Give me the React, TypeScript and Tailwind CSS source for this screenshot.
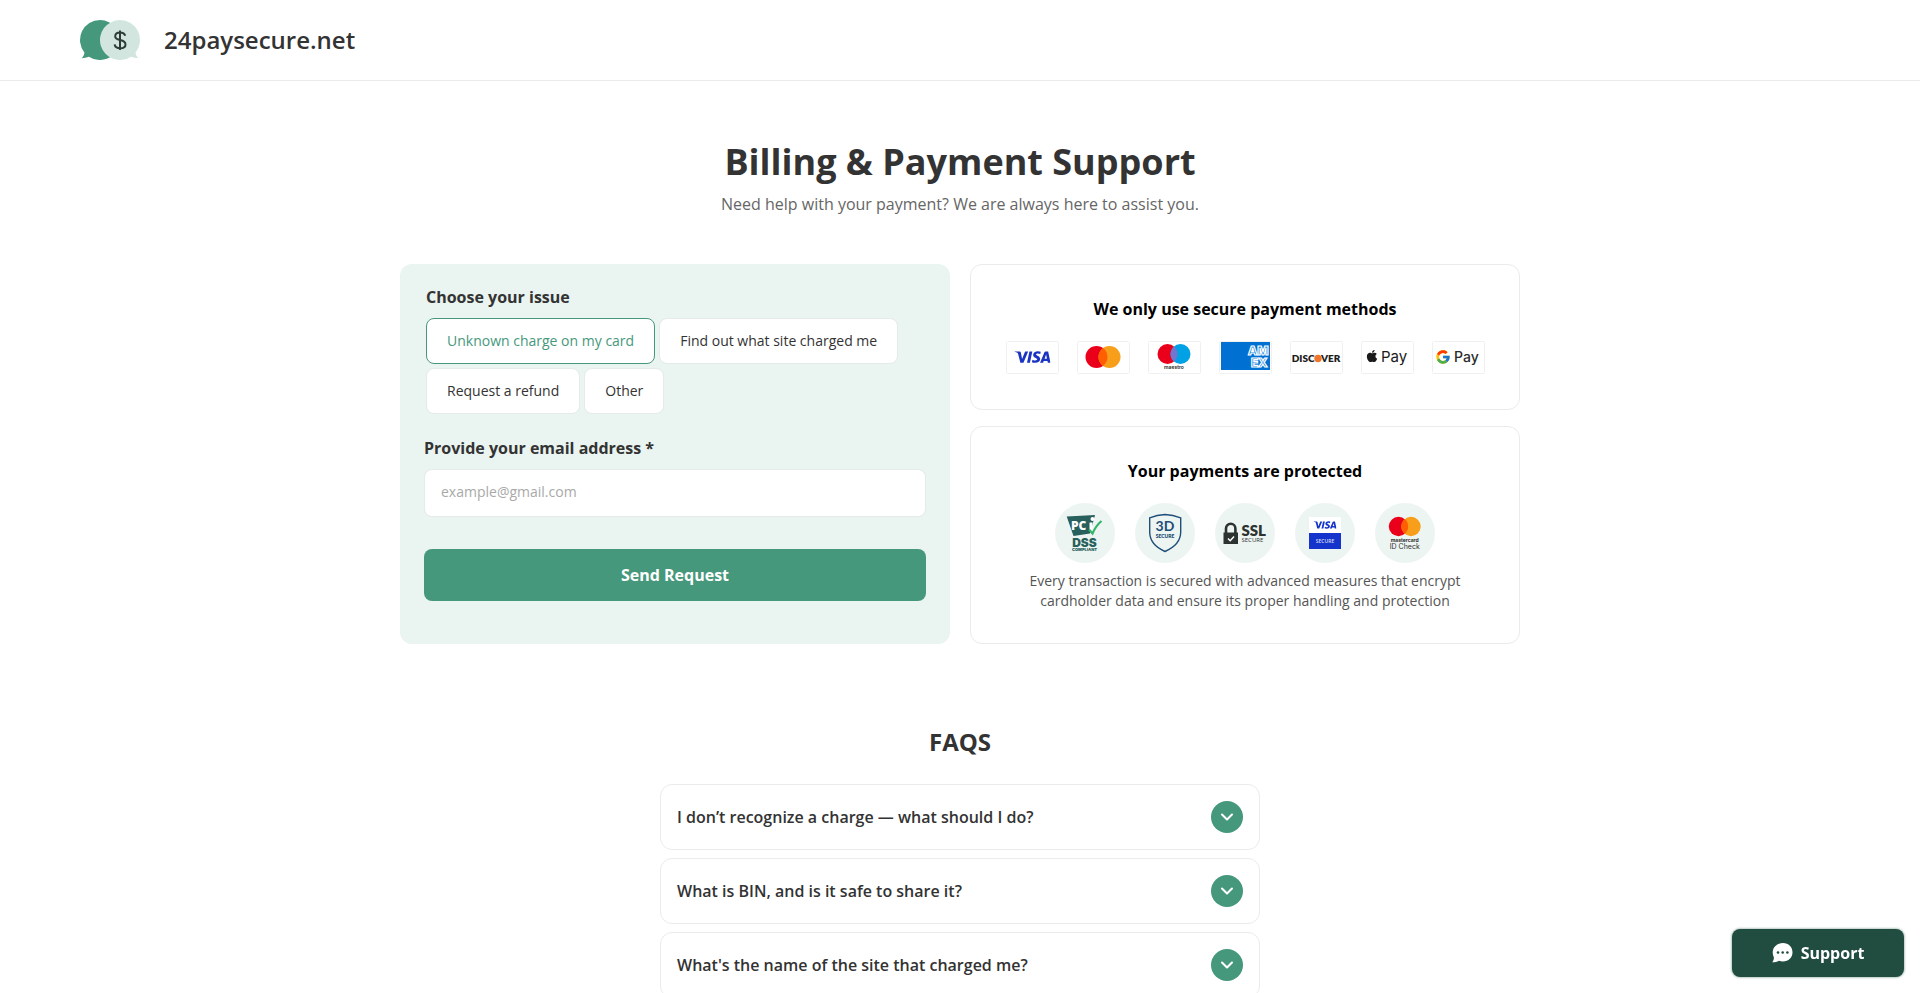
import React, { useState } from "react";
import { FaApple } from "react-icons/fa";
import { FcGoogle } from "react-icons/fc";
import { SiVisa } from "react-icons/si";
import { ChevronDown } from "lucide-react";

const issues = [
  "Unknown charge on my card",
  "Find out what site charged me",
  "Request a refund",
  "Other",
];

const faqs = [
  {
    question: "I don’t recognize a charge — what should I do?",
  },
  {
    question: "What is BIN, and is it safe to share it?",
  },
  {
    question: "What's the name of the site that charged me?",
  },
];

function Logo() {
  return (
    <svg width="60" height="40" viewBox="0 0 60 40" aria-hidden="true">
      <path d="M20 0a20 20 0 1 1-11 36.700C6.500 37.400 4.200 38 1.800 38.300 3.400 36.400 4.300 34.500 4.400 32.500A20 20 0 0 1 20 0Z" fill="#46987c" />
      <path d="M40 0a20 20 0 1 0 11 36.700C53.500 37.400 55.800 38 58.200 38.300 56.600 36.400 55.700 34.500 55.600 32.500A20 20 0 0 0 40 0Z" fill="#d2e6df" />
      <path
        d="M40 10.500V30M45.200 15.800C44.600 13.600 42.800 12.500 40.100 12.500 37.200 12.500 35.200 13.900 35.200 16.200 35.200 18.600 37.200 19.400 40.100 20 43.200 20.700 45.500 21.700 45.500 24.400 45.500 26.900 43.300 28.200 40.200 28.200 37 28.200 35 26.800 34.600 24.300"
        fill="none"
        stroke="#2f3b37"
        strokeWidth="2"
      />
    </svg>
  );
}

function PaymentMethod({ label, children }: { label: string; children: React.ReactNode }) {
  return (
    <li className="h-[33px] w-[53px] shrink-0" aria-label={label}>
      <svg width="53" height="33" viewBox="0 0 53 33">
        <rect x="0.5" y="0.5" width="52" height="32" rx="1" fill="#fff" stroke="#f0f0f0" />
        {children}
      </svg>
    </li>
  );
}

function PaymentMethods() {
  return (
    <ul className="flex flex-wrap justify-center gap-[18px]">
      <PaymentMethod label="Visa">
        <SiVisa x="8.500" y="-2" size={36} color="#1a34c4" />
      </PaymentMethod>
      <PaymentMethod label="Mastercard">
        <circle cx="19.500" cy="16" r="11" fill="#eb001b" />
        <circle cx="32.500" cy="16" r="11" fill="#f79e1b" />
        <path d="M26 7.100a11 11 0 0 1 0 17.800a11 11 0 0 1 0-17.800Z" fill="#ff5f00" />
      </PaymentMethod>
      <PaymentMethod label="Maestro">
        <circle cx="19.500" cy="13" r="10" fill="#eb001b" />
        <circle cx="32.500" cy="13" r="10" fill="#00a2e5" />
        <path d="M26 5.400a10 10 0 0 1 0 15.200a10 10 0 0 1 0-15.200Z" fill="#7375cf" />
        <text x="26" y="28" textAnchor="middle" fontSize="5" fontWeight="600" fill="#222" className="font-['Inter',sans-serif]">maestro</text>
      </PaymentMethod>
      <PaymentMethod label="American Express">
        <svg x="2" y="1" width="49" height="28" viewBox="0 0 49 28">
          <rect width="49" height="28" fill="#0071d3" />
          <g className="font-['Inter',sans-serif]" fontSize="12" fontWeight="800" fill="#0071d3" stroke="#fff" strokeWidth="1.200">
            <text x="27" y="13">AM</text>
            <text x="30" y="25">EX</text>
          </g>
        </svg>
      </PaymentMethod>
      <PaymentMethod label="Discover">
        <g className="font-['Lato',sans-serif]" fontSize="10" fontWeight="800" fill="#1d1d1d">
          <text x="24.500" y="21" textAnchor="end">DISC</text>
          <text x="31" y="21">VER</text>
        </g>
        <circle cx="28" cy="17.500" r="3.700" fill="#f0762b" />
      </PaymentMethod>
      <PaymentMethod label="Apple Pay">
        <FaApple x="4" y="8" size={14} color="#1a1a1a" />
        <text x="20" y="21" fontSize="15" fill="#1a1a1a" className="font-['Inter',sans-serif]">Pay</text>
      </PaymentMethod>
      <PaymentMethod label="Google Pay">
        <FcGoogle x="3" y="8" size={16} />
        <text x="22" y="21" fontSize="14" fontWeight="500" fill="#2b2b2b" className="font-['Inter',sans-serif]">Pay</text>
      </PaymentMethod>
    </ul>
  );
}

function Badge({ label, children }: { label: string; children: React.ReactNode }) {
  return (
    <li className="size-[60px] rounded-full bg-[#edf5f2]" aria-label={label}>
      <svg width="60" height="60" viewBox="0 0 60 60">
        {children}
      </svg>
    </li>
  );
}

function SecurityBadges() {
  return (
    <ul className="flex flex-wrap justify-center gap-5">
      <Badge label="PCI DSS compliant">
        <path d="M11.700 13.500L40 12L35 30.500L18.500 33Z" fill="#27605c" />
        <text x="16" y="27" fontSize="12" fontWeight="800" fill="#fff" className="font-['Open_Sans',sans-serif]">PC</text>
        <path d="M34.500 19.500H37.500V27.500H34.500Z" fill="#fff" />
        <circle cx="37.500" cy="16" r="2" fill="#fff" />
        <path d="M34 26.500L37.500 30.500Q41 22.500 46.500 18" fill="none" stroke="#35b56a" strokeWidth="2.200" />
        <text x="29.500" y="43.500" textAnchor="middle" fontSize="12" fontWeight="900" fill="#27605c" className="font-['Inter',sans-serif]">DSS</text>
        <text x="29.500" y="48" textAnchor="middle" fontSize="4" fontWeight="900" fill="#27605c" className="font-['Inter',sans-serif]">COMPLIANT</text>
      </Badge>
      <Badge label="3D Secure">
        <path d="M30 11.500Q38 11.800 45.700 14.800V29C45.700 38 39 44.500 30 48.500C21 44.500 14.700 38 14.700 29V14.800Q22 11.800 30 11.500Z" fill="none" stroke="#1f4e79" strokeWidth="1.400" />
        <text x="30" y="28" textAnchor="middle" fontSize="14" fontWeight="700" fill="#1f4e79" className="font-['Lato',sans-serif]">3D</text>
        <text x="30" y="35" textAnchor="middle" fontSize="5" fontWeight="800" fill="#1f4e79" className="font-['Lato',sans-serif]">SECURE</text>
      </Badge>
      <Badge label="SSL secure">
        <path d="M11 30V25.500a4.700 4.700 0 0 1 9.400 0V30" fill="none" stroke="#2d3331" strokeWidth="2.600" />
        <rect x="8.500" y="29.500" width="14.500" height="11.500" fill="#2d3331" />
        <path d="M13 35.500L15.200 37.700L19 33.500" fill="none" stroke="#fff" strokeWidth="1.500" />
        <text x="26.500" y="33" fontSize="15" fontWeight="800" fill="#2d3331" className="font-['Lato',sans-serif]">SSL</text>
        <text x="26.500" y="39" fontSize="6" fill="#2d3331" className="font-['Open_Sans',sans-serif]">SECURE</text>
      </Badge>
      <Badge label="Visa Secure">
        <rect x="14" y="14" width="32" height="16" fill="#fff" />
        <rect x="14" y="30" width="32" height="16" fill="#1434cb" />
        <SiVisa x="18.500" y="10.500" size={23} color="#1434cb" />
        <text x="30" y="40" textAnchor="middle" fontSize="5" fontWeight="600" fill="#d8dff8" className="font-['Open_Sans',sans-serif]">SECURE</text>
      </Badge>
      <Badge label="Mastercard ID Check">
        <circle cx="23.500" cy="23.500" r="9.700" fill="#eb001b" />
        <circle cx="36" cy="23.500" r="9.700" fill="#f79e1b" />
        <path d="M29.750 16.100a9.700 9.700 0 0 1 0 14.800a9.700 9.700 0 0 1 0-14.800Z" fill="#ff5f00" />
        <text x="29.700" y="39" textAnchor="middle" fontSize="5" fontWeight="700" fill="#2d2d2d" className="font-['Inter',sans-serif]">mastercard</text>
        <text x="29.700" y="46" textAnchor="middle" fontSize="7" fill="#2d2d2d" className="font-['Inter',sans-serif]">ID Check</text>
      </Badge>
    </ul>
  );
}

function RequestForm() {
  const [issue, setIssue] = useState(issues[0]);

  return (
    <form
      className="rounded-xl bg-[#eaf4f0] px-6 pt-[22px] pb-10"
      onSubmit={(e) => e.preventDefault()}
    >
      <fieldset className="mx-0.5">
        <legend className="mb-[10px] text-base leading-[22px] font-bold">Choose your issue</legend>
        <div className="flex flex-wrap gap-1">
          {issues.map((item) => (
            <button
              key={item}
              type="button"
              aria-pressed={item === issue}
              onClick={() => setIssue(item)}
              className={`h-[46px] rounded-lg border bg-white px-5 text-sm ${
                item === issue ? "border-[#46987c] text-[#46987c]" : "border-[#e4ebe8]"
              }`}
            >
              {item}
            </button>
          ))}
        </div>
      </fieldset>

      <label htmlFor="email" className="mt-[23px] mb-[10px] block text-base leading-[22px] font-bold">
        Provide your email address *
      </label>
      <input
        id="email"
        type="email"
        placeholder="example@gmail.com"
        className="h-12 w-full rounded-lg border border-[#e4ebe8] bg-white px-4 pb-1 text-sm placeholder:text-[#a9a9a9]"
      />
      <button type="submit" className="mt-8 h-[52px] w-full rounded-lg bg-[#46987c] text-base font-bold text-white">
        Send Request
      </button>
    </form>
  );
}

export default function App() {
  return (
    <div className="min-h-screen bg-white font-['Open_Sans',sans-serif] text-[#333]">
      {/* Header */}
      <header className="border-b border-[#ebebeb]">
        <a href="#" className="flex h-20 items-center gap-6 px-20">
          <Logo />
          <span className="text-2xl font-semibold">24paysecure.net</span>
        </a>
      </header>

      <main className="px-4 pt-[57px] pb-10">
        <h1 className="text-center text-4xl leading-[48px] font-bold">Billing &amp; Payment Support</h1>
        <p className="mt-[7px] text-center text-base leading-[22px] text-[#666]">
          Need help with your payment? We are always here to assist you.
        </p>

        {/* Request form and payment info */}
        <div className="mx-auto mt-[49px] grid max-w-[1120px] grid-cols-1 gap-5 lg:grid-cols-2">
          <RequestForm />
          <div className="flex flex-col gap-4 text-center">
            <section className="rounded-xl border border-[#ebebeb] px-6 pt-[33px] pb-[35px]">
              <h2 className="mb-[21px] text-base leading-[22px] font-bold text-black">
                We only use secure payment methods
              </h2>
              <PaymentMethods />
            </section>
            <section className="rounded-xl border border-[#ebebeb] px-12 pt-[33px] pb-8">
              <h2 className="mb-[21px] text-base leading-[22px] font-bold text-black">
                Your payments are protected
              </h2>
              <SecurityBadges />
              <p className="mt-2 text-sm leading-5 text-[#555]">
                Every transaction is secured with advanced measures that encrypt cardholder data and ensure its proper handling and protection
              </p>
            </section>
          </div>
        </div>

        {/* FAQ */}
        <h2 className="mt-[82px] text-center text-2xl leading-8 font-bold">FAQS</h2>
        <div className="mx-auto mt-[26px] flex max-w-[600px] flex-col gap-2">
          {faqs.map((faq) => (
            <button
              key={faq.question}
              type="button"
              className="flex h-[66px] items-center justify-between rounded-xl border border-[#ebebeb] px-4 text-left text-base font-semibold"
            >
              {faq.question}
              <span className="flex size-8 items-center justify-center rounded-full bg-[#46987c] text-white">
                <ChevronDown size={20} strokeWidth={2.5} />
              </span>
            </button>
          ))}
        </div>
      </main>

      {/* Support chat */}
      <button
        type="button"
        className="fixed right-4 bottom-4 flex h-12 w-[172px] items-center justify-center gap-2 rounded-lg bg-[#204d3f] text-base font-bold text-white shadow-[0_0_2px_1px_#b9cac4]"
      >
        <svg width="21" height="20" viewBox="0 0 21 20" aria-hidden="true">
          <path d="M11 0C16.600 0 20.500 4 20.500 9.300S16.600 18.500 11 18.500C9.500 18.500 8.200 18.200 7 17.700C5 18.700 2.800 19.300 0.300 19.300C1.500 17.800 1.900 16.200 1.900 14.300C1.200 13 0.700 11.200 0.700 9.300C0.700 4 5.400 0 11 0Z" fill="#fff" />
          <circle cx="6" cy="9.500" r="1.300" fill="#204d3f" />
          <circle cx="10.700" cy="9.500" r="1.300" fill="#204d3f" />
          <circle cx="15.400" cy="9.500" r="1.300" fill="#204d3f" />
        </svg>
        Support
      </button>
    </div>
  );
}
